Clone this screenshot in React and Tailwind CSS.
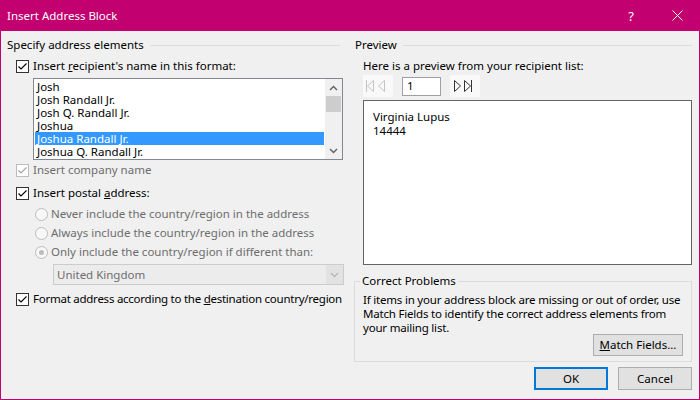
import React from 'react';

const names = [
  'Josh',
  'Josh Randall Jr.',
  'Josh Q. Randall Jr.',
  'Joshua',
  'Joshua Randall Jr.',
  'Joshua Q. Randall Jr.',
];

function Check({ disabled }) {
  return (
    <span
      className={`w-[13px] h-[13px] shrink-0 border bg-white flex items-center justify-center ${
        disabled ? 'border-[#bcbcbc]' : 'border-[#333333]'
      }`}
    >
      <svg width="11" height="11" viewBox="0 0 11 11">
        <path
          d="M1.5 5.5 L4 8 L9.5 2.5"
          fill="none"
          stroke={disabled ? '#a0a0a0' : '#000'}
          strokeWidth="1.1"
        />
      </svg>
    </span>
  );
}

function Radio({ checked }) {
  return (
    <span className="w-[13px] h-[13px] shrink-0 rounded-full border border-[#bcbcbc] bg-[#f7f7f7] flex items-center justify-center">
      {checked && <span className="w-[5px] h-[5px] rounded-full bg-[#bcbcbc]" />}
    </span>
  );
}

function Chevron({ up, color = '#606060' }) {
  return (
    <svg width="9" height="6" viewBox="0 0 9 6">
      <path
        d={up ? 'M1 5 L4.5 1.5 L8 5' : 'M1 1 L4.5 4.5 L8 1'}
        fill="none"
        stroke={color}
        strokeWidth="1.4"
      />
    </svg>
  );
}

function NavGlyph({ dir, bar, color }) {
  // thin outline triangle, with a bar on the outer side for first/last
  return (
    <svg width="8" height="14" viewBox="0 0 8 14">
      {bar && dir === 'left' && <path d="M0.5 1 L0.5 13" stroke={color} strokeWidth="1" />}
      {bar && dir === 'right' && <path d="M7.5 1 L7.5 13" stroke={color} strokeWidth="1" />}
      <path
        d={
          dir === 'left'
            ? bar
              ? 'M7.5 1.5 L1.5 7 L7.5 12.5 Z'
              : 'M6.5 1.5 L0.5 7 L6.5 12.5 Z'
            : bar
            ? 'M0.5 1.5 L6.5 7 L0.5 12.5 Z'
            : 'M1.5 1.5 L7.5 7 L1.5 12.5 Z'
        }
        fill="none"
        stroke={color}
        strokeWidth="1"
      />
    </svg>
  );
}

function GroupLabel({ children, className = '' }) {
  return (
    <div className={`flex items-center h-[14px] ${className}`}>
      <span>{children}</span>
      <span className="flex-1 h-px bg-[#dcdcdc] ml-[6px]" />
    </div>
  );
}

function CheckRow({ disabled, className = '', children }) {
  return (
    <div className={`flex items-center h-[14px] gap-[4px] ml-[9px] whitespace-nowrap ${className}`}>
      <Check disabled={disabled} />
      <span className={disabled ? 'text-[#6d6d6d]' : ''}>{children}</span>
    </div>
  );
}

function RadioRow({ checked, className = '', children }) {
  return (
    <div className={`flex items-center h-[14px] gap-[3px] ml-[28px] whitespace-nowrap text-[#6d6d6d] ${className}`}>
      <Radio checked={checked} />
      <span>{children}</span>
    </div>
  );
}

export default function App() {
  return (
    <div className="w-[700px] h-[400px] flex flex-col bg-[#c2006f] font-['Noto_Sans',sans-serif] text-[11.5px] leading-[14px] text-black overflow-hidden">
      {/* Title bar */}
      <div className="h-[31px] shrink-0 flex items-center text-white">
        <span className="pl-[7px] text-[11.5px]">Insert Address Block</span>
        <span className="ml-auto w-[46px] h-full flex items-center justify-center text-[13px]">?</span>
        <span className="w-[46px] h-full flex items-center justify-center">
          <svg width="11" height="11" viewBox="0 0 11 11">
            <path d="M0.5 0.5 L10.5 10.5 M10.5 0.5 L0.5 10.5" stroke="#fff" strokeWidth="1" />
          </svg>
        </span>
      </div>

      {/* Body */}
      <div className="flex-1 mx-px mb-px bg-[#f0f0f0] flex pl-[6px] pr-[7px]">
        {/* Left column */}
        <div className="w-[336px] flex flex-col pt-[7px]">
          <GroupLabel className="mr-[3px]">Specify address elements</GroupLabel>

          <CheckRow className="mt-[7px]">
            Insert <u>r</u>ecipient's name in this format:
          </CheckRow>

          <div className="mt-[5px] ml-[26px] w-[310px] h-[82px] border border-[#828790] bg-white flex">
            <div className="flex-1 pt-px px-px leading-[13px]">
              {names.map((n, i) => (
                <div
                  key={n}
                  className={`h-[13px] pl-[2px] ${i === 4 ? 'bg-[#3399ff] text-white' : ''}`}
                >
                  {n}
                </div>
              ))}
            </div>
            <div className="w-[17px] flex flex-col bg-[#f0f0f0]">
              <div className="h-[17px] flex items-center justify-center">
                <Chevron up />
              </div>
              <div className="h-[16px] mx-px bg-[#cdcdcd]" />
              <div className="flex-1" />
              <div className="h-[17px] flex items-center justify-center">
                <Chevron />
              </div>
            </div>
          </div>

          <CheckRow disabled className="mt-[3px]">Insert company name</CheckRow>
          <CheckRow className="mt-[9px]">
            Insert postal <u>a</u>ddress:
          </CheckRow>

          <RadioRow className="mt-[7px]">Never include the country/region in the address</RadioRow>
          <RadioRow className="mt-[5px]">Always include the country/region in the address</RadioRow>
          <RadioRow checked className="mt-[5px]">
            Only include the country/region if different than:
          </RadioRow>

          <div className="mt-[5px] ml-[46px] w-[291px] h-[21px] border border-[#cccccc] bg-[#ececec] flex items-center">
            <span className="pl-[3px] flex-1 text-[#6d6d6d]">United Kingdom</span>
            <span className="w-[17px] h-full bg-[#e2e2e2] flex items-center justify-center">
              <Chevron color="#b8b8b8" />
            </span>
          </div>

          <CheckRow className="mt-[7px] tracking-[-0.25px]">
            Format address according to the <u>d</u>estination country/region
          </CheckRow>
        </div>

        {/* Right column */}
        <div className="ml-[12px] flex-1 flex flex-col pt-[7px]">
          <GroupLabel>Preview</GroupLabel>

          <div className="mt-[7px] ml-[8px] h-[14px]">Here is a preview from your recipient list:</div>

          <div className="mt-[2px] ml-[8px] h-[22px] flex items-center">
            <div className="w-[30px] h-[22px] bg-[#f9f9f9] flex items-center gap-[4px] pl-[3px]">
              <NavGlyph dir="left" bar color="#c4c4c4" />
              <NavGlyph dir="left" color="#c4c4c4" />
            </div>
            <div className="ml-[9px] w-[39px] h-[19px] border border-[#a0a0a0] bg-white flex items-center pl-[4px]">
              1
            </div>
            <div className="ml-[9px] w-[30px] h-[22px] bg-[#f9f9f9] flex items-center gap-[3px] pl-[3px]">
              <NavGlyph dir="right" color="#333" />
              <NavGlyph dir="right" bar color="#333" />
            </div>
          </div>

          <div className="mt-[3px] ml-[8px] h-[165px] border border-[#646464] bg-white pl-[9px] pt-[9px]">
            <div>Virginia Lupus</div>
            <div>14444</div>
          </div>

          <fieldset className="mt-[9px] -ml-px border border-[#dcdcdc] px-[5px] pb-[5px]">
            <legend className="px-[2px] leading-[14px]">Correct Problems</legend>
            <div className="mt-[5px] ml-[3px] mr-[-5px] leading-[14px] tracking-[-0.2px]">
              If items in your address block are missing or out of order, use Match Fields to identify
              the correct address elements from your mailing list.
            </div>
            <div className="flex justify-end mt-[-1px] pr-[3px]">
              <button className="w-[90px] h-[22px] border border-[#adadad] bg-[#e1e1e1]">
                <u>M</u>atch Fields...
              </button>
            </div>
          </fieldset>

          <div className="mt-[5px] flex justify-end gap-[10px]">
            <button className="w-[74px] h-[23px] border-2 border-[#0078d7] bg-[#e1e1e1]">OK</button>
            <button className="w-[74px] h-[23px] border border-[#adadad] bg-[#e1e1e1]">Cancel</button>
          </div>
        </div>
      </div>
    </div>
  );
}
